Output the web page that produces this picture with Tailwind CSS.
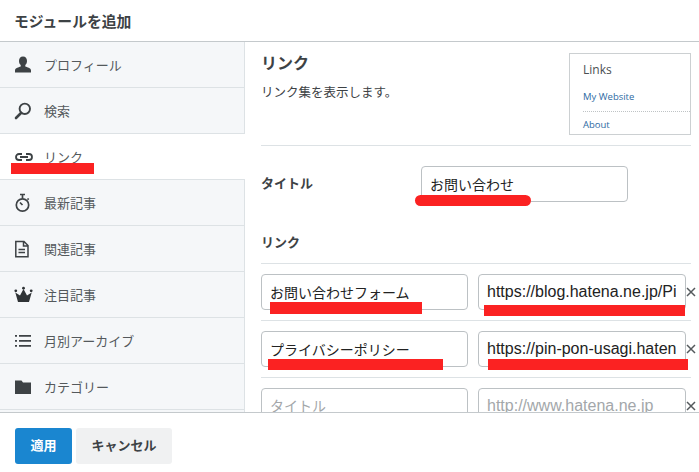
<!DOCTYPE html>
<html lang="ja">
<head>
<meta charset="UTF-8">
<title>モジュールを追加</title>
<script src="https://cdn.jsdelivr.net/npm/@tailwindcss/browser@4"></script>
</head>
<body class="bg-white font-['Liberation_Sans','Noto_Sans_CJK_JP',sans-serif] text-[#3d4245]">
<div class="relative w-[699px] h-[472px] overflow-hidden flex flex-col">
  <!-- header -->
  <header class="h-[42px] shrink-0 border-b border-[#c4c9cc] pl-[15px] flex items-center">
    <h1 class="text-[14.8px] font-bold pt-[4px] -ml-px">モジュールを追加</h1>
  </header>

  <div class="h-[371px] shrink-0 flex overflow-hidden border-b border-[#c4c9cc]">
    <!-- module list -->
    <ul class="w-[245px] shrink-0 bg-[#f5f7f9] border-r border-[#dde2e5] text-[13px] text-[#54595c]">
      <li class="h-[46px] border-b border-[#dde2e5] flex items-center pl-[14px] gap-[12px]">
        <svg class="w-[18px] h-[18px] text-[#3d4245]" viewBox="0 0 18 18" fill="currentColor"><path d="M9 .5c2.600 0 4 1.900 4 4.400 0 1.800-.7 3.200-1.700 4.200v1.500c1.700.8 5.700 1.500 5.700 3.800v2.100H1v-2.100c0-2.300 4-3 5.700-3.800V9.100C5.700 8.100 5 6.700 5 4.900 5 2.400 6.400.5 9 .5z"/></svg>
        <span class="pt-[2px]">プロフィール</span>
      </li>
      <li class="h-[46px] border-b border-[#dde2e5] flex items-center pl-[14px] gap-[12px]">
        <svg class="w-[18px] h-[18px] text-[#3d4245]" viewBox="0 0 18 18" fill="none" stroke="currentColor"><circle cx="10.800" cy="6.800" r="5.200" stroke-width="1.900"/><path d="M7 11l-5 5" stroke-width="2.600" stroke-linecap="round"/></svg>
        <span class="pt-[2px]">検索</span>
      </li>
      <li class="h-[46px] -mr-px bg-white border-b border-[#dde2e5] flex items-center pl-[14px] gap-[10px]">
        <svg class="w-[20px] h-[18px] text-[#3d4245]" viewBox="0 0 20 18" fill="none" stroke="currentColor" stroke-width="1.800"><path d="M8 6H5a3 3 0 0 0 0 6h3M12 6h3a3 3 0 0 1 0 6h-3M6 9h8"/></svg>
        <span class="pt-[2px]">リンク</span>
      </li>
      <li class="h-[46px] border-b border-[#dde2e5] flex items-center pl-[14px] gap-[12px]">
        <svg class="w-[18px] h-[20px] text-[#3d4245]" viewBox="0 0 18 20" fill="none" stroke="currentColor" stroke-width="1.700"><circle cx="8.500" cy="12" r="6.200"/><path d="M6 1.500h5M8.500 2v3.500M8.500 12L6 9.500M13.500 5.500l1.200 1.200"/></svg>
        <span class="pt-[2px]">最新記事</span>
      </li>
      <li class="h-[46px] border-b border-[#dde2e5] flex items-center pl-[14px] gap-[12px]">
        <svg class="w-[18px] h-[18px] text-[#3d4245]" viewBox="0 0 18 18" fill="none" stroke="currentColor" stroke-width="1.500"><path d="M1.800 1.500h8.200l4 4v11.200H1.800zM9.500 1.700v4.300h4.500M4.500 9.500h6.500M4.500 12.500h6.500"/></svg>
        <span class="pt-[2px]">関連記事</span>
      </li>
      <li class="h-[46px] border-b border-[#dde2e5] flex items-center pl-[14px] gap-[11px]">
        <svg class="w-[19px] h-[18px] text-[#2f3336]" viewBox="0 0 19 18" fill="currentColor"><path d="M4 16L1.300 6.500l4.700 3L9.500 3l3.500 6.500 4.700-3L15 16z"/><circle cx="1.800" cy="4.800" r="1.400"/><circle cx="9.500" cy="2.200" r="1.400"/><circle cx="17.200" cy="4.800" r="1.400"/></svg>
        <span class="pt-[2px]">注目記事</span>
      </li>
      <li class="h-[46px] border-b border-[#dde2e5] flex items-center pl-[14px] gap-[12px]">
        <svg class="w-[18px] h-[18px] text-[#3d4245]" viewBox="0 0 18 18" fill="currentColor"><path d="M1 3h2v1.800H1zM5 3h12v1.800H5zM1 8h2v1.800H1zM5 8h12v1.800H5zM1 13h2v1.800H1zM5 13h12v1.800H5z"/></svg>
        <span class="pt-[2px]">月別アーカイブ</span>
      </li>
      <li class="h-[46px] border-b border-[#dde2e5] flex items-center pl-[14px] gap-[12px]">
        <svg class="w-[18px] h-[18px] text-[#3d4245]" viewBox="0 0 18 18" fill="currentColor"><path d="M1 2.500h6.500l1.500 2h8V16H1z"/></svg>
        <span class="pt-[2px]">カテゴリー</span>
      </li>
    </ul>

    <!-- module form -->
    <section class="flex-1 min-w-0 pl-[16px] pr-[8px] overflow-hidden">
      <div class="h-[104px] border-b border-[#dde2e5] flex justify-between pt-[11px]">
        <div>
          <h2 class="text-[16px] font-bold leading-[22px]">リンク</h2>
          <p class="text-[12.500px] leading-[18px] mt-[9px]">リンク集を表示します。</p>
        </div>
        <div class="w-[122px] h-[82px] border border-[#ccd0d2] pl-[13px] overflow-hidden font-['Open_Sans',sans-serif]">
          <p class="text-[12px] leading-[18px] mt-[7px] text-[#4b4f52]">Links</p>
          <p class="text-[9.500px] text-[#2d6aa3] leading-[14px] mt-[11px] pb-[7px] border-b border-dotted border-[#bfc3c5]">My Website</p>
          <p class="text-[9.500px] text-[#2d6aa3] leading-[14px] mt-[6px]">About</p>
        </div>
      </div>

      <div class="flex items-center mt-[20px]">
        <label class="w-[160px] text-[13px] font-bold">タイトル</label>
        <input value="お問い合わせ" class="w-[207px] h-[36px] border border-[#bcc1c4] rounded-[4px] px-[8px] text-[14px] text-[#222]">
      </div>

      <h3 class="text-[13px] font-bold leading-[18px] mt-[32px]">リンク</h3>

      <div class="mt-[11px] border-t border-b border-[#dde2e5] py-[10px] flex items-center gap-[10px]">
        <input value="お問い合わせフォーム" class="w-[207px] shrink-0 h-[36px] border border-[#bcc1c4] rounded-[4px] px-[8px] text-[14px] text-[#222]">
        <input value="https://blog.hatena.ne.jp/Pin-pon-usagi" class="w-[208px] shrink-0 h-[36px] border border-[#bcc1c4] rounded-[4px] pl-[8px] pr-[9px] text-[16px] text-[#222]">
        <svg class="w-[10px] h-[10px] -ml-[10px] shrink-0 text-[#54595c]" viewBox="0 0 10 10" stroke="currentColor" stroke-width="1.500"><path d="M1 1l8 8M9 1l-8 8"/></svg>
      </div>
      <div class="border-b border-[#dde2e5] py-[10px] flex items-center gap-[10px]">
        <input value="プライバシーポリシー" class="w-[207px] shrink-0 h-[36px] border border-[#bcc1c4] rounded-[4px] px-[8px] text-[14px] text-[#222]">
        <input value="https://pin-pon-usagi.hatenablog.com/" class="w-[208px] shrink-0 h-[36px] border border-[#bcc1c4] rounded-[4px] pl-[8px] pr-[9px] text-[16px] text-[#222]">
        <svg class="w-[10px] h-[10px] -ml-[10px] shrink-0 text-[#54595c]" viewBox="0 0 10 10" stroke="currentColor" stroke-width="1.500"><path d="M1 1l8 8M9 1l-8 8"/></svg>
      </div>
      <div class="py-[10px] flex items-center gap-[10px]">
        <input placeholder="タイトル" class="w-[207px] shrink-0 h-[36px] border border-[#bcc1c4] rounded-[4px] px-[8px] text-[14px] placeholder:text-[#a3a7aa]">
        <input placeholder="http://www.hatena.ne.jp" class="w-[208px] shrink-0 h-[36px] border border-[#bcc1c4] rounded-[4px] px-[8px] text-[16px] placeholder:text-[#a3a7aa]">
        <svg class="w-[10px] h-[10px] -ml-[10px] shrink-0 text-[#54595c]" viewBox="0 0 10 10" stroke="currentColor" stroke-width="1.500"><path d="M1 1l8 8M9 1l-8 8"/></svg>
      </div>
    </section>
  </div>

  <!-- footer -->
  <footer class="flex-1 flex items-start pl-[15px] pt-[15px] gap-[4px] text-[13px] font-bold">
    <button class="w-[57px] h-[36px] rounded-[3px] bg-[#1a86d0] text-white">適用</button>
    <button class="w-[96px] h-[36px] rounded-[3px] bg-[#f0f1f2] text-[#3d4245]">キャンセル</button>
  </footer>

  <!-- red marker annotations -->
  <div class="absolute left-[11px] top-[163px] w-[83px] h-[11px] bg-[#fb2222]"></div>
  <div class="absolute left-[415px] top-[195px] w-[116px] h-[11px] rounded-full bg-[#fb2222]"></div>
  <div class="absolute left-[270px] top-[302px] w-[152px] h-[12px] bg-[#fb2222]"></div>
  <div class="absolute left-[484px] top-[305px] w-[201px] h-[11px] bg-[#fb2222]"></div>
  <div class="absolute left-[268px] top-[359px] w-[175px] h-[11px] bg-[#fb2222]"></div>
  <div class="absolute left-[488px] top-[359px] w-[200px] h-[11px] bg-[#fb2222]"></div>
</div>
</body>
</html>
